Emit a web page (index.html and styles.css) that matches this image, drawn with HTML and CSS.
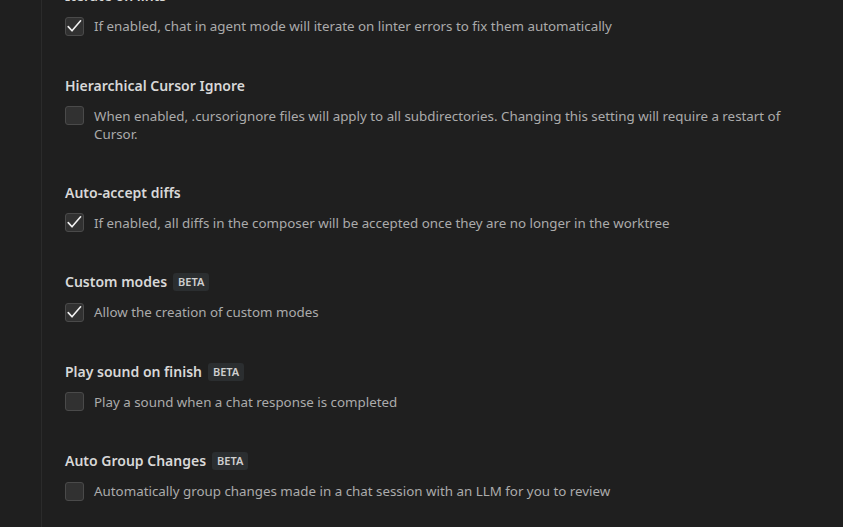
FILE: index.html
```html
<!DOCTYPE html>
<html>
<head>
<meta charset="utf-8">
<link rel="stylesheet" href="styles.css">
</head>
<body>
<div class="page">
  <aside class="side"></aside>
  <main class="content">
    <section class="setting">
      <div class="title">Iterate on lints</div>
      <label class="row">
        <span class="box checked"><svg viewBox="0 0 19 19"><path d="M3.2 9.6 L7 13.8 L15.6 3.8" /></svg></span>
        <span class="desc">If enabled, chat in agent mode will iterate on linter errors to fix them automatically</span>
      </label>
    </section>
    <section class="setting">
      <div class="title">Hierarchical Cursor Ignore</div>
      <label class="row">
        <span class="box"></span>
        <span class="desc">When enabled, .cursorignore files will apply to all subdirectories. Changing this setting will require a restart of Cursor.</span>
      </label>
    </section>
    <section class="setting">
      <div class="title">Auto-accept diffs</div>
      <label class="row">
        <span class="box checked"><svg viewBox="0 0 19 19"><path d="M3.2 9.6 L7 13.8 L15.6 3.8" /></svg></span>
        <span class="desc">If enabled, all diffs in the composer will be accepted once they are no longer in the worktree</span>
      </label>
    </section>
    <section class="setting">
      <div class="title">Custom modes <span class="badge">BETA</span></div>
      <label class="row">
        <span class="box checked"><svg viewBox="0 0 19 19"><path d="M3.2 9.6 L7 13.8 L15.6 3.8" /></svg></span>
        <span class="desc">Allow the creation of custom modes</span>
      </label>
    </section>
    <section class="setting">
      <div class="title">Play sound on finish <span class="badge">BETA</span></div>
      <label class="row">
        <span class="box"></span>
        <span class="desc">Play a sound when a chat response is completed</span>
      </label>
    </section>
    <section class="setting">
      <div class="title">Auto Group Changes <span class="badge">BETA</span></div>
      <label class="row">
        <span class="box"></span>
        <span class="desc">Automatically group changes made in a chat session with an LLM for you to review</span>
      </label>
    </section>
  </main>
</div>
</body>
</html>
```

FILE: styles.css
```css
html, body {
  margin: 0;
  padding: 0;
  background: #1f1f1f;
  height: 100%;
  overflow: hidden;
}
body {
  font-family: "Noto Sans", "Open Sans", sans-serif;
  color: #cccccc;
}
.page {
  display: flex;
  height: 527px;
}
.side {
  width: 41px;
  flex: none;
  border-right: 1px solid #2b2b2b;
}
.content {
  flex: 1;
  padding-left: 23px;
  padding-right: 50px;
  margin-top: -14px;
  display: flex;
  flex-direction: column;
  gap: 40px;
}
.title {
  font-size: 14px;
  font-weight: 600;
  line-height: 20px;
  color: #d8d8d8;
  display: flex;
  align-items: center;
  gap: 6px;
  margin-bottom: 11px;
}
.badge {
  font-size: 11px;
  font-weight: 600;
  line-height: 18px;
  padding: 0 5px;
  background: #2b2e30;
  color: #cfcfcf;
  border-radius: 3px;
}
.row {
  display: flex;
  align-items: flex-start;
  gap: 10px;
}
.box {
  width: 17px;
  height: 17px;
  margin-top: -0.5px;
  flex: none;
  border: 1px solid #4a4a4a;
  background: #313131;
  border-radius: 3px;
  position: relative;
}
.box svg {
  position: absolute;
  left: -1px;
  top: -1px;
  width: 19px;
  height: 19px;
  fill: none;
  stroke: #f2f2f2;
  stroke-width: 1.6;
  stroke-linecap: round;
  stroke-linejoin: round;
}
.desc {
  font-size: 13.35px;
  line-height: 18px;
  color: #ababab;
}
```
